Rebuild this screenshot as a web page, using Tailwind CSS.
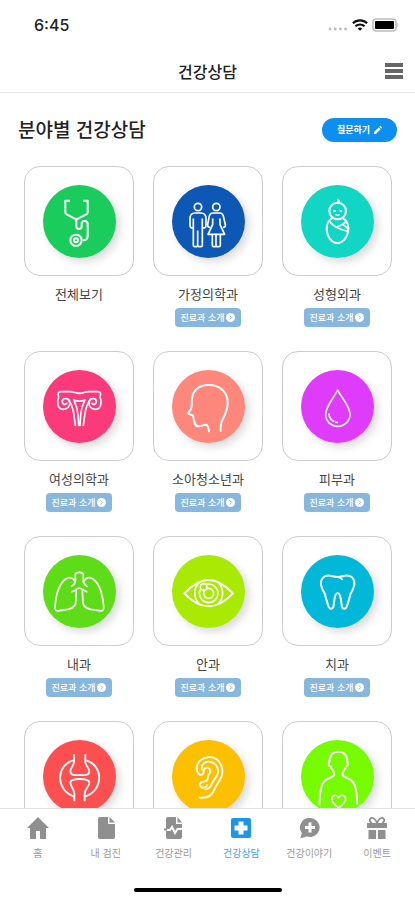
<!DOCTYPE html>
<html lang="ko">
<head>
<meta charset="utf-8">
<meta name="viewport" content="width=device-width, initial-scale=1">
<title>건강상담</title>
<script src="https://cdn.jsdelivr.net/npm/@tailwindcss/browser@4"></script>
</head>
<body class="flex h-screen flex-col bg-white font-['Noto_Sans_CJK_KR',sans-serif] text-black">

<!-- Status bar -->
<div class="flex h-[50px] shrink-0 items-center justify-between pr-4 pl-[34px]">
  <span class="font-['Inter',sans-serif] text-base font-medium text-[#222]">6:45</span>
  <div class="flex items-center gap-1">
    <svg class="h-3 w-5" viewBox="0 0 20 12" fill="#bbb"><circle cx="2" cy="10" r="1.4"/><circle cx="7.200" cy="10" r="1.4"/><circle cx="12.400" cy="10" r="1.4"/><circle cx="17.600" cy="10" r="1.4"/></svg>
    <svg class="h-3 w-4" viewBox="0 0 16 12" fill="none" stroke="#111" stroke-width="2.1"><path d="M.9 4.300a10.200 10.200 0 0 1 14.200 0"/><path d="M3.400 7.300a6.600 6.600 0 0 1 9.200 0"/><path d="M8 11.800 5.700 9.600a3.300 3.300 0 0 1 4.600 0z" fill="#111" stroke="none"/></svg>
    <svg class="h-[14px] w-[27px]" viewBox="0 0 27 14"><rect x="1" y="1" width="23" height="12" rx="3" fill="#fff" stroke="#bdbdbd" stroke-width="1.600"/><rect x="3" y="3" width="19" height="8" rx="1" fill="#000"/><path d="M25.300 5v4c1.500-.6 1.500-3.400 0-4z" fill="#bdbdbd"/></svg>
  </div>
</div>

<!-- Title bar -->
<header class="grid h-[43px] shrink-0 grid-cols-[1fr_auto_1fr] items-center border-b border-[#e4e4e4] px-3">
  <span></span>
  <h1 class="text-base font-medium text-[#222]">건강상담</h1>
  <button type="button" aria-label="메뉴" class="justify-self-end">
    <svg class="h-[18px] w-[18px]" viewBox="0 0 18 18" fill="#666"><rect y="1" width="18" height="4"/><rect y="7" width="18" height="4"/><rect y="13" width="18" height="4"/></svg>
  </button>
</header>

<main class="min-h-0 flex-1 overflow-hidden">
  <div class="flex h-[73px] items-center justify-between pr-[18px] pl-[18px]">
    <h2 class="text-[19px] font-medium text-[#222]">분야별 건강상담</h2>
    <button type="button" class="flex h-6 w-[75px] items-center justify-center gap-1 rounded-full bg-[#0d8ff0] text-[9px] font-bold text-white">
      질문하기
      <svg class="h-2 w-2" viewBox="0 0 8 8" fill="#fff"><path d="M0 8V6.100L4.700 1.400l1.900 1.900L1.900 8zM5.300.8l.6-.6a.7.7 0 0 1 1 0l.9.9a.7.7 0 0 1 0 1l-.6.6z"/></svg>
    </button>
  </div>

  <ul class="grid grid-cols-3 gap-x-[19px] pr-[23px] pl-6 text-[13px] text-[#444]">

    <li class="flex h-[185px] flex-col items-center">
      <a href="#" class="flex h-[110px] w-full items-center justify-center rounded-2xl border border-[#ccc]" aria-label="전체보기">
        <svg class="h-[73px] w-[73px] rounded-full bg-[#1acc5c] shadow-[4px_4px_8px_rgba(0,0,0,0.15)]" viewBox="97 89 219 219" fill="none" stroke="#fff" stroke-width="6" stroke-linejoin="round"><path d="M178 136h-14v35q0 4 4 6l24 13q5 3 10 0l25-13q4-2 4-6v-35h-14"/><path d="M197 190v22q0 9 8 9t8-9v-6q0-9 9-9t9 9v36q0 13-14 13"/><circle cx="196" cy="255" r="17"/><circle cx="196" cy="255" r="6"/></svg>
      </a>
      <span class="mt-2 leading-5">전체보기</span>
    </li>

    <li class="flex h-[185px] flex-col items-center">
      <a href="#" class="flex h-[110px] w-full items-center justify-center rounded-2xl border border-[#ccc]" aria-label="가정의학과">
        <svg class="h-[73px] w-[73px] rounded-full bg-[#0c58b4] shadow-[4px_4px_8px_rgba(0,0,0,0.15)]" viewBox="80 89 219 219" fill="none" stroke="#fff" stroke-width="5" stroke-linejoin="round" stroke-linecap="round"><circle cx="158" cy="155" r="11"/><circle cx="213" cy="155" r="11"/><path d="M144 191v79q0 4 4 4h6q3 0 3-4v-43 43q0 4 4 4h6q4 0 4-4v-79"/><path d="M144 218q-10 1-10-8v-20q0-17 15-17h18q15 0 15 17v20q0 9-10 8"/><path d="M202 191v17l-14 29h50l-14-29v-17"/><path d="M193 216q-7-1-6-8l4-22q2-13 12-13h20q10 0 12 13l5 22q1 7-5 8"/><path d="M201 238v32q0 4 4 4h4q3 0 3-4v-32 32q0 4 4 4h5q4 0 4-4v-32"/></svg>
      </a>
      <span class="mt-2 leading-5">가정의학과</span>
      <button type="button" class="mt-1 flex h-[19px] w-[66px] items-center justify-center gap-[2px] rounded bg-[#87b7dc] text-[9px] font-medium whitespace-nowrap text-white">진료과 소개
        <svg class="h-[9px] w-[9px]" viewBox="0 0 9 9"><circle cx="4.500" cy="4.500" r="4.500" fill="#fff"/><path d="m3.800 2.600 1.900 1.900-1.900 1.900" fill="none" stroke="#87b7dc"/></svg></button>
    </li>

    <li class="flex h-[185px] flex-col items-center">
      <a href="#" class="flex h-[110px] w-full items-center justify-center rounded-2xl border border-[#ccc]" aria-label="성형외과">
        <svg class="h-[73px] w-[73px] rounded-full bg-[#12d6c4] shadow-[4px_4px_8px_rgba(0,0,0,0.15)]" viewBox="78 89 219 219" fill="none" stroke="#fff" stroke-width="6" stroke-linecap="round" stroke-linejoin="round"><circle cx="188" cy="167" r="25"/><path d="M188 142q7-4 1-9"/><path d="M176 167h5M195 167h5M183 178q5 3 10 0" stroke-width="4"/><path d="M172 188c-13 8-17 17-17 31 0 24 14 44 32 44s33-20 33-44c0-14-4-23-17-31"/><path d="M163 197c11 17 28 22 54 31M214 196c-6 9-15 14-27 18M205 208l13 11" stroke-width="5"/></svg>
      </a>
      <span class="mt-2 leading-5">성형외과</span>
      <button type="button" class="mt-1 flex h-[19px] w-[66px] items-center justify-center gap-[2px] rounded bg-[#87b7dc] text-[9px] font-medium whitespace-nowrap text-white">진료과 소개
        <svg class="h-[9px] w-[9px]" viewBox="0 0 9 9"><circle cx="4.500" cy="4.500" r="4.500" fill="#fff"/><path d="m3.800 2.600 1.900 1.900-1.900 1.900" fill="none" stroke="#87b7dc"/></svg></button>
    </li>

    <li class="flex h-[185px] flex-col items-center">
      <a href="#" class="flex h-[110px] w-full items-center justify-center rounded-2xl border border-[#ccc]" aria-label="여성의학과">
        <svg class="h-[73px] w-[73px] rounded-full bg-[#fb3a7c] shadow-[4px_4px_8px_rgba(0,0,0,0.15)]" viewBox="97 89 219 219" fill="none" stroke="#fff" stroke-width="5" stroke-linecap="round" stroke-linejoin="round"><path d="M206 159c-12 0-16-5-28-5h-27c-10 0-10 8-7 16-6 14-4 37 14 37 12 0 21-9 19-22-2-12-19-14-22-4-2 9 7 15 13 8"/><path d="M206 159c12 0 16-5 28-5h27c10 0 10 8 7 16 6 14 4 37-14 37-12 0-21-9-19-22 2-12 19-14 22-4 2 9-7 15-13 8"/><path d="M172 176c10 12 14 26 17 42l5 37M240 176c-10 12-14 26-17 42l-5 37"/><path d="M189 178q17 9 34 0c-8 16-12 30-13 46l-2 31h-4l-2-31c-1-16-5-30-13-46z"/></svg>
      </a>
      <span class="mt-2 leading-5">여성의학과</span>
      <button type="button" class="mt-1 flex h-[19px] w-[66px] items-center justify-center gap-[2px] rounded bg-[#87b7dc] text-[9px] font-medium whitespace-nowrap text-white">진료과 소개
        <svg class="h-[9px] w-[9px]" viewBox="0 0 9 9"><circle cx="4.500" cy="4.500" r="4.500" fill="#fff"/><path d="m3.800 2.600 1.900 1.900-1.900 1.900" fill="none" stroke="#87b7dc"/></svg></button>
    </li>

    <li class="flex h-[185px] flex-col items-center">
      <a href="#" class="flex h-[110px] w-full items-center justify-center rounded-2xl border border-[#ccc]" aria-label="소아청소년과">
        <svg class="h-[73px] w-[73px] rounded-full bg-[#fd877b] shadow-[4px_4px_8px_rgba(0,0,0,0.15)]" viewBox="80 88 219 219" fill="none" stroke="#fff" stroke-width="6" stroke-linecap="round" stroke-linejoin="round"><path d="M191 272c-1-10-4-19-9-20-7 0-15 6-25 5-10-2-8-11-11-18l-3-15-12-4c-6-2 2-8 5-13 6-10 2-18 4-32 2-26 21-42 50-42 33 0 57 20 57 53 0 22-8 37-15 50-5 9-7 21-6 35"/></svg>
      </a>
      <span class="mt-2 leading-5">소아청소년과</span>
      <button type="button" class="mt-1 flex h-[19px] w-[66px] items-center justify-center gap-[2px] rounded bg-[#87b7dc] text-[9px] font-medium whitespace-nowrap text-white">진료과 소개
        <svg class="h-[9px] w-[9px]" viewBox="0 0 9 9"><circle cx="4.500" cy="4.500" r="4.500" fill="#fff"/><path d="m3.800 2.600 1.900 1.900-1.900 1.900" fill="none" stroke="#87b7dc"/></svg></button>
    </li>

    <li class="flex h-[185px] flex-col items-center">
      <a href="#" class="flex h-[110px] w-full items-center justify-center rounded-2xl border border-[#ccc]" aria-label="피부과">
        <svg class="h-[73px] w-[73px] rounded-full bg-[#df3bfa] shadow-[4px_4px_8px_rgba(0,0,0,0.15)]" viewBox="78 88 219 219" fill="none" stroke="#fff" stroke-width="5" stroke-linecap="round" stroke-linejoin="round"><path d="M188 148c-11 23-36 48-36 73 0 21 16 36 36 36s37-15 37-36c0-25-26-50-37-73z"/><path d="M162 220q1 16 14 22M182 245h5" stroke-width="5"/></svg>
      </a>
      <span class="mt-2 leading-5">피부과</span>
      <button type="button" class="mt-1 flex h-[19px] w-[66px] items-center justify-center gap-[2px] rounded bg-[#87b7dc] text-[9px] font-medium whitespace-nowrap text-white">진료과 소개
        <svg class="h-[9px] w-[9px]" viewBox="0 0 9 9"><circle cx="4.500" cy="4.500" r="4.500" fill="#fff"/><path d="m3.800 2.600 1.900 1.900-1.900 1.900" fill="none" stroke="#87b7dc"/></svg></button>
    </li>

    <li class="flex h-[185px] flex-col items-center">
      <a href="#" class="flex h-[110px] w-full items-center justify-center rounded-2xl border border-[#ccc]" aria-label="내과">
        <svg class="h-[73px] w-[73px] rounded-full bg-[#5fdc18] shadow-[4px_4px_8px_rgba(0,0,0,0.15)]" viewBox="97 87 219 219" fill="none" stroke="#fff" stroke-width="5" stroke-linecap="round" stroke-linejoin="round"><path d="M194 166v-20q0-7 12-7t12 7v20c0 7 5 11 11 15M194 166c0 7-5 11-11 15M184 197c11-3 16-11 22-11s11 8 22 11"/><path d="M191 164c-5-10-16-12-26-5-18 13-29 46-32 83-1 11 4 14 13 12l26-4c14-3 21-9 23-19l2-36"/><path d="M221 164c5-10 16-12 26-5 18 13 29 46 32 83 1 11-4 14-13 12l-26-4c-14-3-21-9-23-19l-2-36"/></svg>
      </a>
      <span class="mt-2 leading-5">내과</span>
      <button type="button" class="mt-1 flex h-[19px] w-[66px] items-center justify-center gap-[2px] rounded bg-[#87b7dc] text-[9px] font-medium whitespace-nowrap text-white">진료과 소개
        <svg class="h-[9px] w-[9px]" viewBox="0 0 9 9"><circle cx="4.500" cy="4.500" r="4.500" fill="#fff"/><path d="m3.800 2.600 1.900 1.900-1.900 1.900" fill="none" stroke="#87b7dc"/></svg></button>
    </li>

    <li class="flex h-[185px] flex-col items-center">
      <a href="#" class="flex h-[110px] w-full items-center justify-center rounded-2xl border border-[#ccc]" aria-label="안과">
        <svg class="h-[73px] w-[73px] rounded-full bg-[#a9ea04] shadow-[4px_4px_8px_rgba(0,0,0,0.15)]" viewBox="80 87 219 219" fill="none" stroke="#fff" stroke-width="6" stroke-linejoin="round"><path d="M117 202c22-23 46-40 73-40s51 17 73 40c-22 23-46 39-73 39s-51-16-73-39z"/><path d="M161 170c-17 17-17 46 0 63M219 170c17 17 17 46 0 63" stroke-width="5"/><circle cx="190" cy="202" r="28" stroke-width="5"/><circle cx="190" cy="202" r="15" stroke-width="5"/><circle cx="175" cy="183" r="10" fill="#a9ea04" stroke-width="5"/></svg>
      </a>
      <span class="mt-2 leading-5">안과</span>
      <button type="button" class="mt-1 flex h-[19px] w-[66px] items-center justify-center gap-[2px] rounded bg-[#87b7dc] text-[9px] font-medium whitespace-nowrap text-white">진료과 소개
        <svg class="h-[9px] w-[9px]" viewBox="0 0 9 9"><circle cx="4.500" cy="4.500" r="4.500" fill="#fff"/><path d="m3.800 2.600 1.900 1.900-1.900 1.900" fill="none" stroke="#87b7dc"/></svg></button>
    </li>

    <li class="flex h-[185px] flex-col items-center">
      <a href="#" class="flex h-[110px] w-full items-center justify-center rounded-2xl border border-[#ccc]" aria-label="치과">
        <svg class="h-[73px] w-[73px] rounded-full bg-[#02b8d8] shadow-[4px_4px_8px_rgba(0,0,0,0.15)]" viewBox="288 87 219 219" fill="none" stroke="#fff" stroke-width="6" stroke-linecap="round" stroke-linejoin="round"><path d="M398 153c-15 0-31-12-44 2-13 15-3 34 6 50 3 12 6 27 12 39 3 6 12 5 13-1 3-12 2-42 13-42s10 30 13 42c2 6 10 7 13 1 6-12 9-27 12-39 9-16 19-35 6-50-13-14-29-2-44-2z"/><path d="M398 153q8 1 13 7" stroke-width="5"/></svg>
      </a>
      <span class="mt-2 leading-5">치과</span>
      <button type="button" class="mt-1 flex h-[19px] w-[66px] items-center justify-center gap-[2px] rounded bg-[#87b7dc] text-[9px] font-medium whitespace-nowrap text-white">진료과 소개
        <svg class="h-[9px] w-[9px]" viewBox="0 0 9 9"><circle cx="4.500" cy="4.500" r="4.500" fill="#fff"/><path d="m3.800 2.600 1.900 1.900-1.900 1.900" fill="none" stroke="#87b7dc"/></svg></button>
    </li>

    <li class="flex h-[185px] flex-col items-center">
      <a href="#" class="flex h-[110px] w-full items-center justify-center rounded-2xl border border-[#ccc]">
        <svg class="h-[73px] w-[73px] rounded-full bg-[#fc4f50] shadow-[4px_4px_8px_rgba(0,0,0,0.15)]" viewBox="97 86 219 219" fill="none" stroke="#fff" stroke-width="5.500" stroke-linejoin="round"><path d="M190 129v22c0 12-11 18-11 29 0 14 15 11 28 11s29 3 29-11c0-11-12-17-12-29v-22"/><path d="M191 270v-22c0-17-12-21-12-34 0-10 15-11 28-11s29 1 29 11c0 13-14 17-14 34v22"/><path d="M187 147c-52 16-52 89 2 108M227 147c52 16 52 89-2 108"/></svg>
      </a>
    </li>

    <li class="flex h-[185px] flex-col items-center">
      <a href="#" class="flex h-[110px] w-full items-center justify-center rounded-2xl border border-[#ccc]">
        <svg class="h-[73px] w-[73px] rounded-full bg-[#fdc000] shadow-[4px_4px_8px_rgba(0,0,0,0.15)]" viewBox="80 642 219 219" fill="none" stroke="#fff" stroke-width="5.500" stroke-linecap="round" stroke-linejoin="round"><path d="M161 744c-11-10-8-31 4-41 14-12 36-13 49-3 15 12 22 34 14 53-8 17-16 25-21 38-6 16-22 26-45 24"/><path d="M170 731c-4-14 8-26 23-24 18 2 29 20 24 36-4 12-13 19-18 31-3 9-9 15-18 16"/><path d="M161 744c5 4 10 2 12-1 3-5 1-9 4-14 4-6 14-5 17 1 4 7-1 12-4 16-4 6-1 11-5 17-4 5-11 3-17 6-7 4-5 12 1 15 7 3 13-1 17-6"/></svg>
      </a>
    </li>

    <li class="flex h-[185px] flex-col items-center">
      <a href="#" class="flex h-[110px] w-full items-center justify-center rounded-2xl border border-[#ccc]">
        <svg class="h-[73px] w-[73px] rounded-full bg-[#76fb00] shadow-[4px_4px_8px_rgba(0,0,0,0.15)]" viewBox="288 86 219 219" fill="none" stroke="#fff" stroke-width="6" stroke-linejoin="round"><path d="M343 280c2-45 6-67 22-76 10-6 22-7 23-15 0-8-8-14-11-23-6-2-7-9-4-13 0-20 9-32 27-32s27 12 27 32c3 4 2 11-4 13-3 9-11 15-11 23 1 8 13 9 23 15 16 9 20 31 22 76"/><path d="M401 290c-11-9-21-16-21-27 0-13 16-15 21-4 5-11 21-9 21 4 0 11-10 18-21 27z" stroke-width="5"/></svg>
      </a>
    </li>
  </ul>
</main>

<!-- Bottom tabs -->
<nav class="shrink-0 border-t border-[#e0e0e0] bg-white">
  <div class="grid h-[76px] grid-cols-6 px-1 pt-[7px] text-[10px] leading-4 whitespace-nowrap text-[#999]">
    <a href="#" class="flex flex-col items-center gap-[5px]">
      <svg class="h-6 w-6" viewBox="0 0 24 24" fill="#8f8f8f"><path d="M12 1 1 12h3v11h6v-8h4v8h6V12h3z"/></svg>홈
    </a>
    <a href="#" class="flex flex-col items-center gap-[5px]">
      <svg class="h-6 w-6" viewBox="0 0 24 24" fill="#8f8f8f"><path d="M6 1h8v7h7v13a2 2 0 0 1-2 2H6a2 2 0 0 1-2-2V3a2 2 0 0 1 2-2zM15.500 1 21 6.500h-5.500z"/></svg>내 검진
    </a>
    <a href="#" class="flex flex-col items-center gap-[5px]">
      <svg class="h-6 w-6" viewBox="0 0 24 24" fill="#8f8f8f"><path d="M6 1h8v7h6v13a2 2 0 0 1-2 2H6a2 2 0 0 1-2-2V3a2 2 0 0 1 2-2zM15.500 1 20 6.500h-4.500z"/><path d="M3 14h5l2-3 3 6 2.500-4H21" fill="none" stroke="#fff" stroke-width="2"/><path d="M2 12.500h3v2H2z"/></svg>건강관리
    </a>
    <a href="#" aria-current="page" class="flex flex-col items-center gap-[5px] text-[#4a9fe6]">
      <svg class="h-6 w-6" viewBox="0 0 24 24"><rect x="2" y="2" width="20" height="20" rx="2" fill="#1a96ea"/><path d="M9.500 5.500h5v4h4v5h-4v4h-5v-4h-4v-5h4z" fill="#fff"/></svg>건강상담
    </a>
    <a href="#" class="flex flex-col items-center gap-[5px]">
      <svg class="h-6 w-6" viewBox="0 0 24 24"><path d="M13 2a9.500 9.500 0 1 1-3.500 18.300c-2 1.300-4.500 1.700-6.500 1.500 1-1.300 1.700-3 1.700-4.800A9.500 9.500 0 0 1 13 2z" fill="#8f8f8f"/><path d="M11.500 6.500h3V10H18v3h-3.500v3.500h-3V13H8v-3h3.500z" fill="#fff"/></svg>건강이야기
    </a>
    <a href="#" class="flex flex-col items-center gap-[5px]">
      <svg class="h-6 w-6" viewBox="0 0 24 24" fill="#8f8f8f"><path d="M2 7h20v5H2zM3.500 14H11v9H3.500zM13 14h7.500v9H13z"/><path d="M12 7C10 2 7 1 5.500 2.500S5 6.500 7 7M12 7c2-5 5-6 6.500-4.500S19 6.500 17 7" fill="none" stroke="#8f8f8f" stroke-width="1.800"/></svg>이벤트
    </a>
  </div>
  <div class="flex h-[15px] justify-center pt-[3px]"><div class="h-1 w-[148px] rounded-full bg-black"></div></div>
</nav>
</body>
</html>
